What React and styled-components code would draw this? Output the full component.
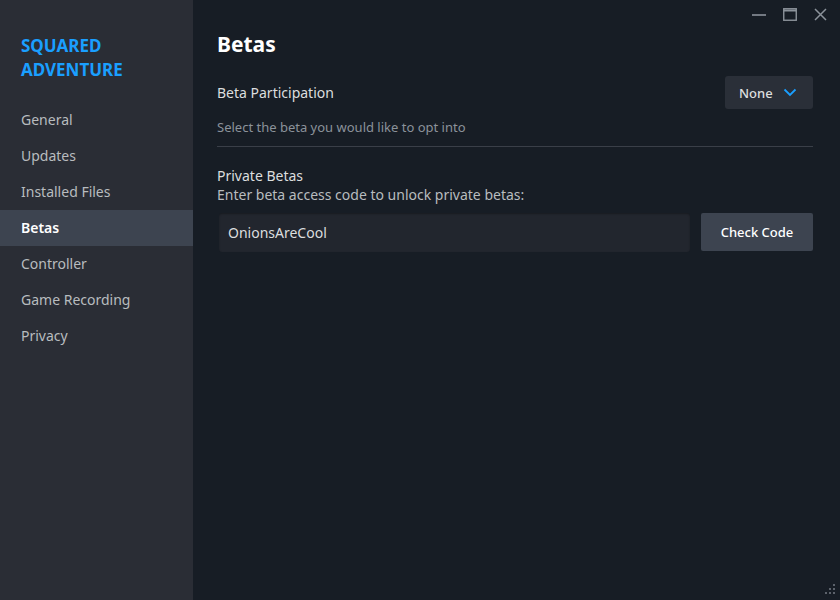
import React from 'react';
import styled, { createGlobalStyle } from 'styled-components';

const font = {
  $main: '"Noto Sans", "Open Sans", Arial, sans-serif'
};

const colors = {
  $sidebarBg: '#2a2d35',
  $mainBg: '#171d25',
  $selected: '#3d4450',
  $blue: '#1a9fff',
  $text: '#dcdedf',
  $muted: '#8b929a',
  $nav: '#b8bcbf'
};

const GlobalStyle = createGlobalStyle`
  html, body {
    margin: 0;
    padding: 0;
    background: ${colors.$mainBg};
  }
  * { box-sizing: border-box; }
`;

// ===========================================================================================
// styled-components
// ===========================================================================================
const Window = styled.div`
  position: relative;
  display: flex;
  width: 840px;
  height: 600px;
  overflow: hidden;
  font-family: ${font.$main};
  background: ${colors.$mainBg};
`;

const Sidebar = styled.nav`
  width: 193px;
  flex-shrink: 0;
  background: ${colors.$sidebarBg};
  padding-top: 34px;
`;

const GameTitle = styled.div`
  padding: 0 21px;
  font-size: 17px;
  line-height: 24px;
  font-weight: 700;
  color: ${colors.$blue};
  text-transform: uppercase;
  margin-bottom: 20px;
`;

const NavItem = styled.div`
  height: 36px;
  line-height: 36px;
  padding-left: 21px;
  font-size: 14px;
  color: ${({ $active }) => ($active ? '#ffffff' : colors.$nav)};
  font-weight: ${({ $active }) => ($active ? 600 : 400)};
  background: ${({ $active }) => ($active ? colors.$selected : 'transparent')};
`;

const Main = styled.main`
  flex: 1;
  padding: 32px 27px 0 24px;
  display: flex;
  flex-direction: column;
`;

const Heading = styled.h1`
  margin: 0 0 20px;
  font-size: 21px;
  line-height: 24px;
  font-weight: 700;
  color: #ffffff;
`;

const Row = styled.div`
  display: flex;
  align-items: center;
  justify-content: space-between;
`;

const Label = styled.div`
  font-size: 14px;
  line-height: 20px;
  color: ${colors.$text};
`;

const Description = styled.div`
  margin-top: ${({ $top }) => $top || 0}px;
  font-size: ${({ $light }) => ($light ? 14 : 13)}px;
  line-height: 18px;
  color: ${({ $light }) => ($light ? colors.$nav : colors.$muted)};
`;

const Dropdown = styled.div`
  display: flex;
  align-items: center;
  gap: 10px;
  height: 33px;
  width: 88px;
  padding-left: 14px;
  border-radius: 3px;
  background: #2a2f38;
  color: ${colors.$text};
  font-size: 13px;
  font-weight: 500;
`;

const Divider = styled.hr`
  margin: 10px 0 19px;
  border: none;
  height: 1px;
  background: #3a3f48;
`;

const CodeRow = styled.div`
  display: flex;
  gap: 11px;
  margin-top: 9px;
  padding-left: 2px;
`;

const CodeInput = styled.div`
  flex: 1;
  height: 39px;
  display: flex;
  align-items: center;
  padding-left: 9px;
  border-radius: 3px;
  background: #22262e;
  color: ${colors.$text};
  font-size: 14px;
  box-shadow: inset 0 1px 2px rgba(0, 0, 0, 0.3);
`;

const Button = styled.div`
  width: 112px;
  height: 38px;
  display: flex;
  align-items: center;
  justify-content: center;
  border-radius: 2px;
  background: #3d4450;
  color: #ffffff;
  font-size: 13px;
  font-weight: 500;
`;

const Controls = styled.div`
  position: absolute;
  top: 5px;
  right: 9px;
  display: flex;
  gap: 10px;
`;

const ControlBtn = styled.div`
  width: 21px;
  height: 18px;
  display: flex;
  align-items: center;
  justify-content: center;
`;

const Grip = styled.svg`
  position: absolute;
  right: 5px;
  bottom: 6px;
`;

// ===========================================================================================
// Main
// ===========================================================================================
const navItems = ['General', 'Updates', 'Installed Files', 'Betas', 'Controller', 'Game Recording', 'Privacy'];

const Chevron = () => (
  <svg width="14" height="9" viewBox="0 0 14 9">
    <path d="M1.5 1.5 L7 7 L12.5 1.5" fill="none" stroke={colors.$blue} strokeWidth="1.8" />
  </svg>
);

const App = () => {
  return (
    <Window>
      <GlobalStyle />
      <Sidebar>
        <GameTitle>Squared<br />Adventure</GameTitle>
        {navItems.map((item) => (
          <NavItem key={item} $active={item === 'Betas'}>{item}</NavItem>
        ))}
      </Sidebar>
      <Main>
        <Heading>Betas</Heading>
        <Row>
          <Label>Beta Participation</Label>
          <Dropdown>
            None
            <Chevron />
          </Dropdown>
        </Row>
        <Description $top={9}>Select the beta you would like to opt into</Description>
        <Divider />
        <Label>Private Betas</Label>
        <Description $light>Enter beta access code to unlock private betas:</Description>
        <CodeRow>
          <CodeInput>OnionsAreCool</CodeInput>
          <Button>Check Code</Button>
        </CodeRow>
      </Main>

      <Controls>
        <ControlBtn>
          <svg width="14" height="14" viewBox="0 0 14 14">
            <path d="M0 8 H14" stroke="#8b929a" strokeWidth="1.6" />
          </svg>
        </ControlBtn>
        <ControlBtn>
          <svg width="14" height="13" viewBox="0 0 14 13">
            <rect x="0.75" y="0.75" width="12.5" height="11.5" fill="none" stroke="#8b929a" strokeWidth="1.4" />
            <path d="M0.75 2.5 H13.25" stroke="#8b929a" strokeWidth="2" />
          </svg>
        </ControlBtn>
        <ControlBtn>
          <svg width="13" height="13" viewBox="0 0 13 13">
            <path d="M1 1 L12 12 M12 1 L1 12" stroke="#8b929a" strokeWidth="1.5" />
          </svg>
        </ControlBtn>
      </Controls>

      <Grip width="10" height="10" viewBox="0 0 10 10">
        <rect x="8" y="0" width="2" height="2" fill="#5c626b" />
        <rect x="4" y="4" width="2" height="2" fill="#5c626b" />
        <rect x="8" y="4" width="2" height="2" fill="#5c626b" />
        <rect x="0" y="8" width="2" height="2" fill="#5c626b" />
        <rect x="4" y="8" width="2" height="2" fill="#5c626b" />
        <rect x="8" y="8" width="2" height="2" fill="#5c626b" />
      </Grip>
    </Window>
  );
};

export default App;
